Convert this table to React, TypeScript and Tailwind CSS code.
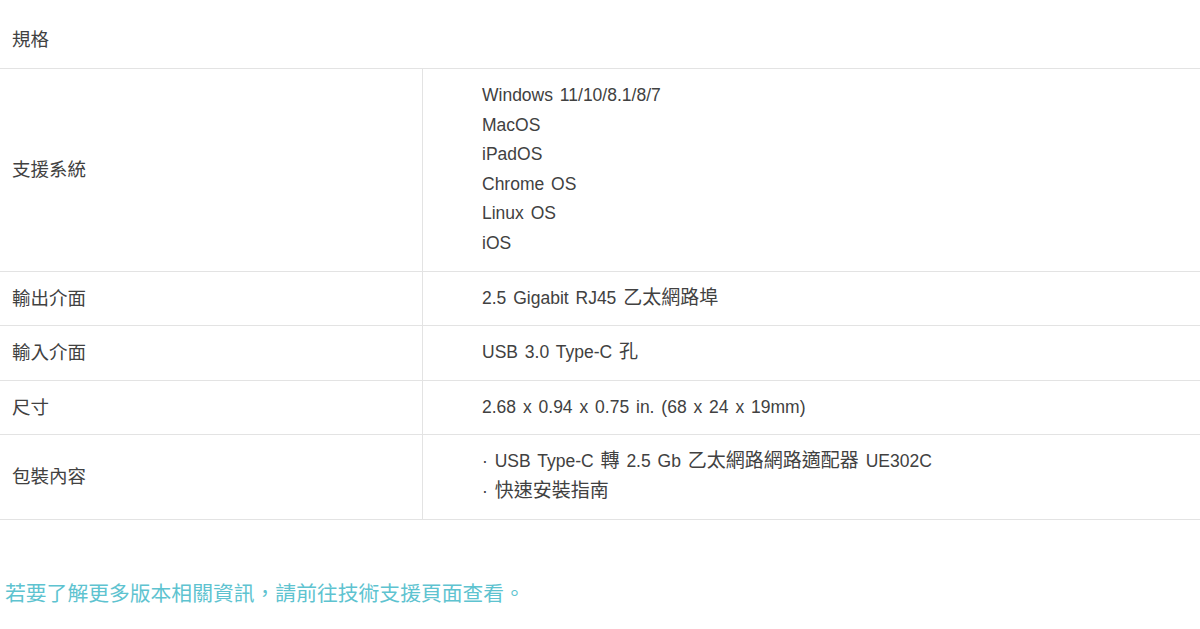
const rows: { label: string; values: string[] }[] = [
  {
    label: "支援系統",
    values: ["Windows 11/10/8.1/8/7", "MacOS", "iPadOS", "Chrome OS", "Linux OS", "iOS"],
  },
  { label: "輸出介面", values: ["2.5 Gigabit RJ45 乙太網路埠"] },
  { label: "輸入介面", values: ["USB 3.0 Type-C 孔"] },
  { label: "尺寸", values: ["2.68 x 0.94 x 0.75 in. (68 x 24 x 19mm)"] },
  {
    label: "包裝內容",
    values: ["· USB Type-C 轉 2.5 Gb 乙太網路網路適配器 UE302C", "· 快速安裝指南"],
  },
];

// CJK runs render a touch larger than the Latin text next to them
function Mixed({ text }: { text: string }) {
  const parts = text.split(/([\u3400-\u9fff]+)/);
  return (
    <>
      {parts.map((p, i) =>
        /[\u3400-\u9fff]/.test(p) ? (
          <span key={i} className="text-[19px] leading-none">
            {p}
          </span>
        ) : (
          <span key={i}>{p}</span>
        )
      )}
    </>
  );
}

export default function App() {
  return (
    <div className="w-[1200px] h-[629px] bg-white text-[#414141] text-[17.5px] leading-[29.6px] font-['Liberation_Sans','Noto_Sans_CJK_TC',sans-serif] overflow-hidden">
      <div className="h-[68px] pl-3 pt-[25px] text-[18.5px]">規格</div>
      <div className="border-t border-[#e3e3e3]">
        {rows.map((r) => (
          <div key={r.label} className="flex border-b border-[#e3e3e3]">
            <div className="w-[423px] shrink-0 border-r border-[#e3e3e3] pl-3 flex items-center text-[18.5px]">
              {r.label}
            </div>
            <div className="flex-1 py-3 pl-[59px] [word-spacing:2px]">
              {r.values.map((v) => (
                <div key={v}>
                  <Mixed text={v} />
                </div>
              ))}
            </div>
          </div>
        ))}
      </div>
      <div className="pt-[59px] pl-[5px] text-[20.8px] text-[#5ec3d0]">
        若要了解更多版本相關資訊，請前往技術支援頁面查看。
      </div>
    </div>
  );
}
